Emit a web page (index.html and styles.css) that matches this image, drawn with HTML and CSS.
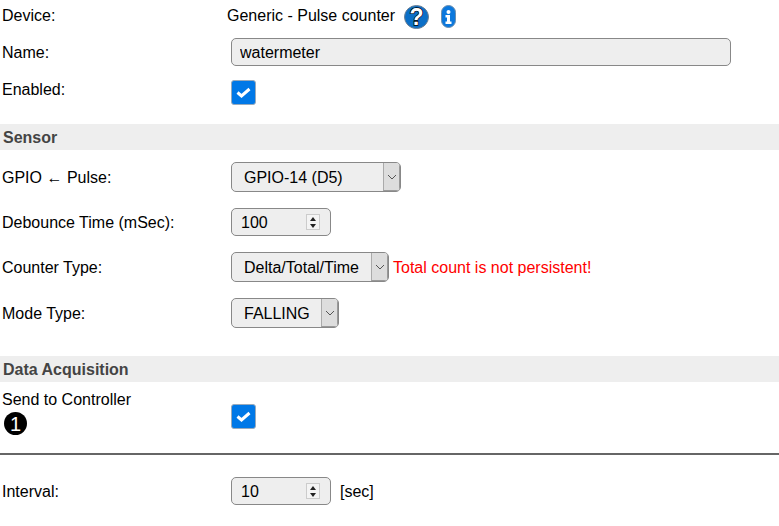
FILE: index.html
```html
<!DOCTYPE html>
<html lang="en">
<head>
  <meta charset="UTF-8" />
  <title>Task Settings</title>
  <link rel="stylesheet" href="styles.css">
</head>
<body>

  <div class="row row-device">
    <div class="label">Device:</div>
    <div class="device-name">Generic - Pulse counter</div>
    <svg class="icon icon-help" width="25" height="24" viewBox="0 0 25 24">
      <ellipse cx="12.500" cy="12" rx="12" ry="11.500" fill="#0b6fc7" stroke="#6d7f92" stroke-width="1"/>
      <text class="help-mark" x="12.500" y="20" text-anchor="middle">?</text>
    </svg>
    <svg class="icon icon-info" width="15" height="23" viewBox="0 0 15 23">
      <rect x=".5" y=".5" width="14" height="22" rx="7" fill="#0b78dd" stroke="#6d8fae"/>
      <circle cx="7.500" cy="7" r="2" fill="#fff"/>
      <path d="M4.500 10h4.500v6.500h1.500v2.500H4.500v-2.500H6v-4H4.500z" fill="#fff"/>
    </svg>
  </div>

  <div class="row row-name">
    <label class="label">Name:</label>
    <input class="wide" type="text" value="watermeter">
  </div>

  <div class="row row-enabled">
    <label class="label label-top">Enabled:</label>
    <span class="check">
      <svg width="15" height="11" viewBox="0 0 15 11"><path d="M1.500 5.500l4 3.500L13.500 2" fill="none" stroke="#fff" stroke-width="3"/></svg>
    </span>
  </div>

  <h3 class="section section-sensor">Sensor</h3>

  <div class="row row-gpio">
    <label class="label">GPIO &larr; Pulse:</label>
    <div class="select select-gpio">
      <span class="value">GPIO-14 (D5)</span>
      <span class="arrow"><svg width="10" height="6" viewBox="0 0 10 6"><path d="M1 1l4 4 4-4" fill="none" stroke="#555"/></svg></span>
    </div>
  </div>

  <div class="row row-debounce">
    <label class="label">Debounce Time (mSec):</label>
    <div class="number">
      <span class="number-value">100</span>
      <span class="spin"><i class="up"></i><i class="down"></i></span>
    </div>
  </div>

  <div class="row row-counter">
    <label class="label">Counter Type:</label>
    <div class="select select-counter">
      <span class="value">Delta/Total/Time</span>
      <span class="arrow"><svg width="10" height="6" viewBox="0 0 10 6"><path d="M1 1l4 4 4-4" fill="none" stroke="#555"/></svg></span>
    </div>
    <span class="warning">Total count is not persistent!</span>
  </div>

  <div class="row row-mode">
    <label class="label">Mode Type:</label>
    <div class="select select-mode">
      <span class="value">FALLING</span>
      <span class="arrow"><svg width="10" height="6" viewBox="0 0 10 6"><path d="M1 1l4 4 4-4" fill="none" stroke="#555"/></svg></span>
    </div>
  </div>

  <h3 class="section section-data">Data Acquisition</h3>

  <div class="row row-send">
    <div class="label label-stack">
      <div>Send to Controller</div>
      <div class="badge">1</div>
    </div>
    <span class="check check-send">
      <svg width="15" height="11" viewBox="0 0 15 11"><path d="M1.500 5.500l4 3.500L13.500 2" fill="none" stroke="#fff" stroke-width="3"/></svg>
    </span>
  </div>

  <hr class="divider">

  <div class="row row-interval">
    <label class="label">Interval:</label>
    <div class="number">
      <span class="number-value">10</span>
      <span class="spin"><i class="up"></i><i class="down"></i></span>
    </div>
    <span class="unit">[sec]</span>
  </div>

</body>
</html>
```

FILE: styles.css
```css
body {
  font-family: 'Liberation Sans', Arial, sans-serif;
  font-size: 16px;
  color: #000;
  background-color: #fff;
  margin: 0;
  padding: 0;
  overflow: hidden;
}

.row {
  display: flex;
  align-items: center;
  padding-left: 2px;
}

.label {
  width: 229px;
  flex: none;
  padding-top: 2px;
}

.label-top {
  align-self: flex-start;
  padding-top: 1px;
}

.row-device {
  height: 32px;
  align-items: flex-start;
  line-height: 32px;
}

.row-device .label {
  padding-top: 0;
}

.device-name {
  margin-left: -4px;
  width: 177px;
  flex: none;
}

.icon {
  display: block;
}

.icon-help {
  margin-top: 5px;
}

.help-mark {
  font-family: 'Liberation Sans', Arial, sans-serif;
  font-size: 23px;
  font-weight: bold;
  fill: #fff;
  stroke: #000;
  stroke-width: 1.4px;
  paint-order: stroke;
}

.icon-info {
  margin-top: 5px;
  margin-left: 12px;
}

.row-name {
  margin-top: 6px;
  height: 28px;
}

.wide {
  width: 500px;
  height: 28px;
  box-sizing: border-box;
  font: inherit;
  color: #000;
  background-color: #eee;
  border: 1px solid #888;
  border-radius: 5px;
  padding: 2px 8px 0;
  outline: none;
}

.row-enabled {
  margin-top: 14px;
  height: 25px;
  align-items: flex-start;
}

.check {
  width: 25px;
  height: 25px;
  box-sizing: border-box;
  background-color: #0078e7;
  border: 1px solid #9ab;
  border-radius: 3px;
  display: flex;
  align-items: center;
  justify-content: center;
}

.section {
  margin: 0;
  height: 26px;
  line-height: 28px;
  padding-left: 3px;
  font-size: 16px;
  font-weight: bold;
  color: #444;
  background-color: #eee;
}

.section-sensor {
  margin-top: 19px;
}

.section-data {
  margin-top: 28px;
}

.select {
  height: 30px;
  box-sizing: border-box;
  display: flex;
  align-items: center;
  background-color: #eee;
  border: 1px solid #888;
  border-radius: 5px;
  overflow: hidden;
}

.value {
  flex: 1;
  padding: 2px 0 0 12px;
}

.arrow {
  width: 16px;
  height: 100%;
  flex: none;
  display: flex;
  align-items: center;
  justify-content: center;
  background-color: #ddd;
  border-left: 1px solid #aaa;
  border-right: 1px solid #999;
  border-bottom: 1px solid #999;
  box-sizing: border-box;
  width: 17px;
}

.select-gpio {
  width: 170px;
}

.select-counter {
  width: 158px;
}

.select-mode {
  width: 108px;
}

.row-gpio {
  margin-top: 12px;
}

.row-debounce {
  margin-top: 16px;
}

.row-counter {
  margin-top: 16px;
}

.row-mode {
  margin-top: 16px;
}

.number {
  width: 100px;
  height: 28px;
  box-sizing: border-box;
  position: relative;
  display: flex;
  align-items: center;
  padding-left: 9px;
  background-color: #eee;
  border: 1px solid #888;
  border-radius: 5px;
}

.number-value {
  padding-top: 2px;
}

.spin {
  position: absolute;
  right: 10px;
  top: 5px;
  width: 14px;
  height: 16px;
  box-sizing: border-box;
  background-color: #f4f4f4;
  border: 1px solid #ccc;
  display: flex;
  flex-direction: column;
  align-items: center;
  justify-content: space-around;
}

.up {
  border-left: 3px solid transparent;
  border-right: 3px solid transparent;
  border-bottom: 4px solid #222;
}

.down {
  border-left: 3px solid transparent;
  border-right: 3px solid transparent;
  border-top: 4px solid #222;
}

.warning {
  color: #f00;
  margin-left: 4px;
  padding-top: 2px;
}

.row-send {
  margin-top: 8px;
  align-items: flex-start;
  height: 47px;
}

.label-stack {
  padding-top: 0;
  line-height: 18px;
  margin-top: 1px;
}

.badge {
  width: 23px;
  height: 23px;
  margin: 3px 0 0 2px;
  border-radius: 50%;
  background-color: #000;
  color: #fff;
  font-size: 20px;
  line-height: 24px;
  text-align: center;
}

.check-send {
  margin-top: 14px;
}

.divider {
  margin: 16px 0 0;
  border: 0;
  border-top: 2px solid #666;
}

.row-interval {
  margin-top: 22px;
}

.unit {
  margin-left: 9px;
  padding-top: 2px;
}
```
